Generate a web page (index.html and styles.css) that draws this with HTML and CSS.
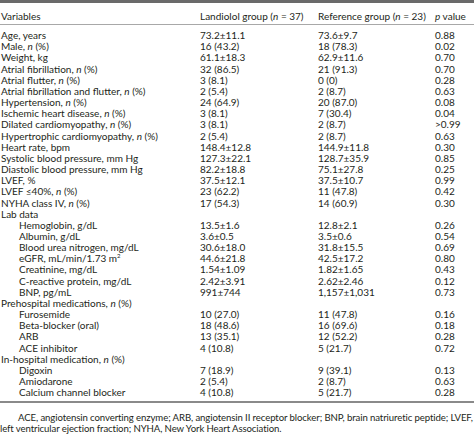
FILE: index.html
```html
<!DOCTYPE html>
<html>

<head>
    <meta charset="utf-8" />
    <title>Patient characteristics</title>
    <link rel="stylesheet" href="styles.css">
</head>

<body>
    <div class="top-bar"></div>
    <table class="data-table">
        <colgroup>
            <col class="col-var">
            <col class="col-land">
            <col class="col-ref">
            <col class="col-p">
        </colgroup>
        <thead>
            <tr>
                <th>Variables</th>
                <th>Landiolol group (<i>n</i> = 37)</th>
                <th>Reference group (<i>n</i> = 23)</th>
                <th><i>p</i> value</th>
            </tr>
        </thead>
        <tbody>
            <tr class="first-row"><td>Age, years</td><td>73.2±11.1</td><td>73.6±9.7</td><td>0.88</td></tr>
            <tr><td>Male, <i>n</i> (%)</td><td>16 (43.2)</td><td>18 (78.3)</td><td>0.02</td></tr>
            <tr><td>Weight, kg</td><td>61.1±18.3</td><td>62.9±11.6</td><td>0.70</td></tr>
            <tr><td>Atrial fibrillation, <i>n</i> (%)</td><td>32 (86.5)</td><td>21 (91.3)</td><td>0.70</td></tr>
            <tr><td>Atrial flutter, <i>n</i> (%)</td><td>3 (8.1)</td><td>0 (0)</td><td>0.28</td></tr>
            <tr><td>Atrial fibrillation and flutter, <i>n</i> (%)</td><td>2 (5.4)</td><td>2 (8.7)</td><td>0.63</td></tr>
            <tr><td>Hypertension, <i>n</i> (%)</td><td>24 (64.9)</td><td>20 (87.0)</td><td>0.08</td></tr>
            <tr><td>Ischemic heart disease, <i>n</i> (%)</td><td>3 (8.1)</td><td>7 (30.4)</td><td>0.04</td></tr>
            <tr><td>Dilated cardiomyopathy, <i>n</i> (%)</td><td>3 (8.1)</td><td>2 (8.7)</td><td>&gt;0.99</td></tr>
            <tr><td>Hypertrophic cardiomyopathy, <i>n</i> (%)</td><td>2 (5.4)</td><td>2 (8.7)</td><td>0.63</td></tr>
            <tr><td>Heart rate, bpm</td><td>148.4±12.8</td><td>144.9±11.8</td><td>0.30</td></tr>
            <tr><td>Systolic blood pressure, mm Hg</td><td>127.3±22.1</td><td>128.7±35.9</td><td>0.85</td></tr>
            <tr><td>Diastolic blood pressure, mm Hg</td><td>82.2±18.8</td><td>75.1±27.8</td><td>0.25</td></tr>
            <tr><td>LVEF, %</td><td>37.5±12.1</td><td>37.5±10.7</td><td>0.99</td></tr>
            <tr><td>LVEF ≤40%, <i>n</i> (%)</td><td>23 (62.2)</td><td>11 (47.8)</td><td>0.42</td></tr>
            <tr><td>NYHA class IV, <i>n</i> (%)</td><td>17 (54.3)</td><td>14 (60.9)</td><td>0.30</td></tr>
            <tr><td>Lab data</td><td></td><td></td><td></td></tr>
            <tr><td class="sub">Hemoglobin, g/dL</td><td>13.5±1.6</td><td>12.8±2.1</td><td>0.26</td></tr>
            <tr><td class="sub">Albumin, g/dL</td><td>3.6±0.5</td><td>3.5±0.6</td><td>0.54</td></tr>
            <tr><td class="sub">Blood urea nitrogen, mg/dL</td><td>30.6±18.0</td><td>31.8±15.5</td><td>0.69</td></tr>
            <tr><td class="sub">eGFR, mL/min/1.73 m<sup>2</sup></td><td>44.6±21.8</td><td>42.5±17.2</td><td>0.80</td></tr>
            <tr><td class="sub">Creatinine, mg/dL</td><td>1.54±1.09</td><td>1.82±1.65</td><td>0.43</td></tr>
            <tr><td class="sub">C-reactive protein, mg/dL</td><td>2.42±3.91</td><td>2.62±2.46</td><td>0.12</td></tr>
            <tr><td class="sub">BNP, pg/mL</td><td>991±744</td><td>1,157±1,031</td><td>0.73</td></tr>
            <tr><td>Prehospital medications, <i>n</i> (%)</td><td></td><td></td><td></td></tr>
            <tr><td class="sub">Furosemide</td><td>10 (27.0)</td><td>11 (47.8)</td><td>0.16</td></tr>
            <tr><td class="sub">Beta-blocker (oral)</td><td>18 (48.6)</td><td>16 (69.6)</td><td>0.18</td></tr>
            <tr><td class="sub">ARB</td><td>13 (35.1)</td><td>12 (52.2)</td><td>0.28</td></tr>
            <tr><td class="sub">ACE inhibitor</td><td>4 (10.8)</td><td>5 (21.7)</td><td>0.72</td></tr>
            <tr><td>In-hospital medication, <i>n</i> (%)</td><td></td><td></td><td></td></tr>
            <tr><td class="sub">Digoxin</td><td>7 (18.9)</td><td>9 (39.1)</td><td>0.13</td></tr>
            <tr><td class="sub">Amiodarone</td><td>2 (5.4)</td><td>2 (8.7)</td><td>0.63</td></tr>
            <tr class="last-row"><td class="sub">Calcium channel blocker</td><td>4 (10.8)</td><td>5 (21.7)</td><td>0.28</td></tr>
        </tbody>
    </table>
    <p class="footnote">ACE, angiotensin converting enzyme; ARB, angiotensin II receptor blocker; BNP, brain natriuretic peptide; LVEF, left ventricular ejection fraction; NYHA, New York Heart Association.</p>
    <div class="bottom-bar"></div>
</body>

</html>
```

FILE: styles.css
```css
body {
    margin: 0;
    padding: 0;
    width: 474px;
    height: 437px;
    overflow: hidden;
    background-color: white;
    color: #231f20;
    font-family: Lato, "Open Sans", sans-serif;
    font-size: 10px;
}

.top-bar {
    height: 3px;
    background-color: #6a6a6a;
}

.data-table {
    width: 474px;
    border-collapse: collapse;
    table-layout: fixed;
}

.col-var {
    width: 200px;
}

.col-land {
    width: 118px;
}

.col-ref {
    width: 117px;
}

.col-p {
    width: 39px;
}

th,
td {
    padding: 0;
    text-align: left;
    vertical-align: middle;
    white-space: nowrap;
    line-height: 11.15px;
}

th {
    font-weight: normal;
    padding-top: 8px;
    padding-bottom: 2px;
    border-bottom: 1px solid #a8a8a8;
}

th:first-child,
td:first-child {
    padding-left: 1px;
}

td.sub {
    padding-left: 19px;
}

.first-row td {
    padding-top: 5px;
}

.last-row td {
    padding-bottom: 3px;
}

tbody {
    border-bottom: 2px solid #8a8a8a;
}

sup {
    font-size: 6px;
    line-height: 0;
    vertical-align: 4px;
}

.footnote {
    margin: 9px 0 0 0;
    font-size: 9.6px;
    letter-spacing: -0.1px;
    line-height: 11px;
    text-indent: 18px;
}

.bottom-bar {
    height: 3px;
    margin-top: 6px;
    background-color: #e6e6e6;
}
```
